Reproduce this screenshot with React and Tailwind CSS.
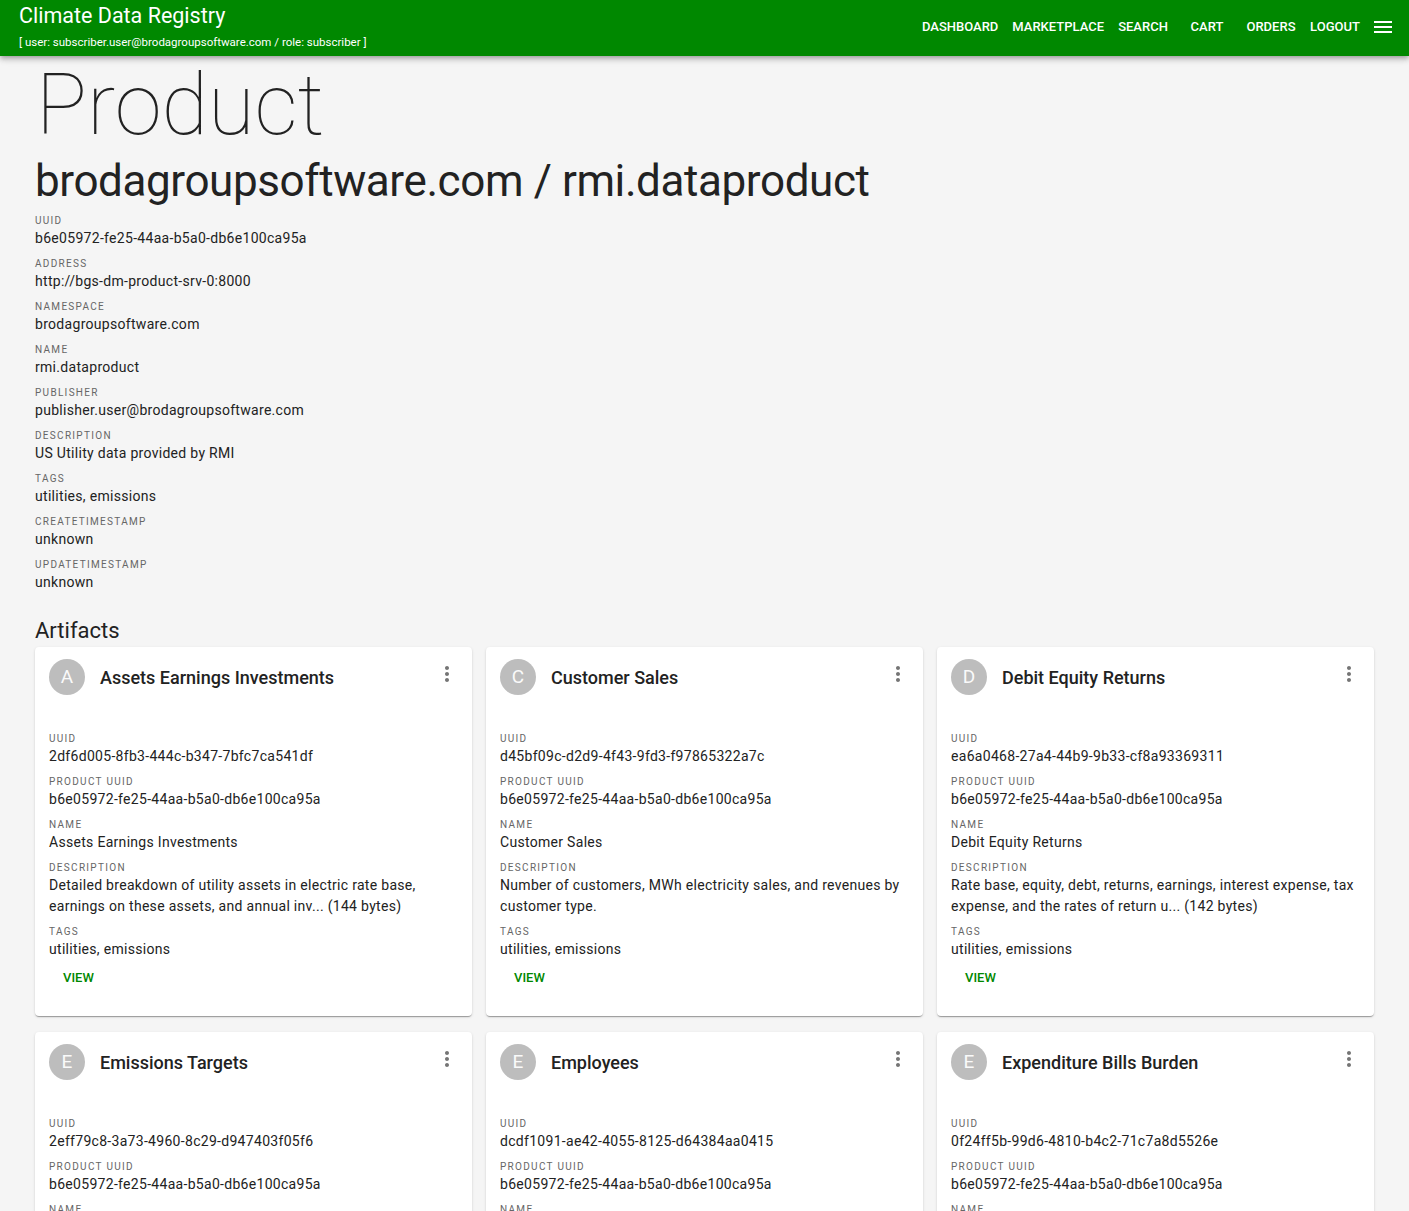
import React from 'react';

const PRODUCT_UUID = 'b6e05972-fe25-44aa-b5a0-db6e100ca95a';

const PRODUCT_FIELDS = [
  { label: 'uuid', value: PRODUCT_UUID },
  { label: 'address', value: 'http://bgs-dm-product-srv-0:8000' },
  { label: 'namespace', value: 'brodagroupsoftware.com' },
  { label: 'name', value: 'rmi.dataproduct' },
  { label: 'publisher', value: 'publisher.user@brodagroupsoftware.com' },
  { label: 'description', value: 'US Utility data provided by RMI' },
  { label: 'tags', value: 'utilities, emissions' },
  { label: 'createtimestamp', value: 'unknown' },
  { label: 'updatetimestamp', value: 'unknown' }
];

const ARTIFACTS = [
  {
    name: 'Assets Earnings Investments',
    uuid: '2df6d005-8fb3-444c-b347-7bfc7ca541df',
    description: 'Detailed breakdown of utility assets in electric rate base, earnings on these assets, and annual inv... (144 bytes)'
  },
  {
    name: 'Customer Sales',
    uuid: 'd45bf09c-d2d9-4f43-9fd3-f97865322a7c',
    description: 'Number of customers, MWh electricity sales, and revenues by customer type.'
  },
  {
    name: 'Debit Equity Returns',
    uuid: 'ea6a0468-27a4-44b9-9b33-cf8a93369311',
    description: 'Rate base, equity, debt, returns, earnings, interest expense, tax expense, and the rates of return u... (142 bytes)'
  },
  {
    name: 'Emissions Targets',
    uuid: '2eff79c8-3a73-4960-8c29-d947403f05f6',
    description: 'Utility emissions targets and progress toward stated reduction goals.'
  },
  {
    name: 'Employees',
    uuid: 'dcdf1091-ae42-4055-8125-d64384aa0415',
    description: 'Number of employees by utility and operating company.'
  },
  {
    name: 'Expenditure Bills Burden',
    uuid: '0f24ff5b-99d6-4810-b4c2-71c7a8d5526e',
    description: 'Customer expenditures, average bills, and energy burden by customer type.'
  }
];

const NAV = ['Dashboard', 'Marketplace', 'Search', 'Cart', 'Orders', 'Logout'];

function Label({ children }) {
  return <div className="text-[10px] leading-[14px] uppercase tracking-[1.3px] text-[#666]">{children}</div>;
}

function Value({ children }) {
  return <div className="text-[14px] leading-[21px] tracking-[0.3px] text-[#222]">{children}</div>;
}

function Field({ label, value, last }) {
  return (
    <div className={last ? '' : 'mb-[8px]'}>
      <Label>{label}</Label>
      <Value>{value}</Value>
    </div>
  );
}

function MoreIcon() {
  return (
    <svg viewBox="0 0 24 24" className="w-[24px] h-[24px] fill-[#757575]">
      <path d="M12 8c1.1 0 2-.9 2-2s-.9-2-2-2-2 .9-2 2 .9 2 2 2zm0 2c-1.1 0-2 .9-2 2s.9 2 2 2 2-.9 2-2-.9-2-2-2zm0 6c-1.1 0-2 .9-2 2s.9 2 2 2 2-.9 2-2-.9-2-2-2z" />
    </svg>
  );
}

function ArtifactCard({ artifact }) {
  return (
    <div className="bg-white rounded-[4px] shadow-[0_2px_1px_-1px_rgba(0,0,0,0.2),0_1px_1px_0_rgba(0,0,0,0.14),0_1px_3px_0_rgba(0,0,0,0.12)] px-[14px] pt-[12px] pb-[15px] flex flex-col">
      <div className="flex items-center h-[36px]">
        <div className="w-[36px] h-[36px] rounded-full bg-[#bdbdbd] text-[#fafafa] text-[19px] flex items-center justify-center shrink-0">
          {artifact.name[0]}
        </div>
        <div className="ml-[15px] flex-1 text-[18px] font-medium text-[#222]">{artifact.name}</div>
        <div className="mr-[-1px] mt-[-6px]">
          <MoreIcon />
        </div>
      </div>
      <div className="mt-[37px]">
        <Field label="uuid" value={artifact.uuid} />
        <Field label="product uuid" value={PRODUCT_UUID} />
        <Field label="name" value={artifact.name} />
        <Field label="description" value={artifact.description} />
        <Field label="tags" value="utilities, emissions" last />
      </div>
      <div className="mt-[3px] mb-[8px]">
        <button className="ml-[6px] px-[8px] h-[30px] text-[13px] font-medium uppercase text-[#008800]">
          View
        </button>
      </div>
    </div>
  );
}

export default function App() {
  return (
    <div className="min-h-screen bg-[#f5f5f5] font-['Roboto',sans-serif]">
      <header className="h-[56px] bg-[#008800] text-white flex justify-between shadow-[0_2px_4px_-1px_rgba(0,0,0,0.2),0_4px_5px_0_rgba(0,0,0,0.14),0_1px_10px_0_rgba(0,0,0,0.12)] relative z-10">
        <div className="pl-[19px] pt-[3px]">
          <div className="text-[21.5px] leading-[26px]">Climate Data Registry</div>
          <div className="text-[11.5px] leading-[14px] mt-[6px]">[ user: subscriber.user@brodagroupsoftware.com / role: subscriber ]</div>
        </div>
        <nav className="flex items-center pb-[2px] pr-[14px]">
          {NAV.map((item) => (
            <button key={item} className="min-w-[64px] px-[7px] h-[36px] flex items-center justify-center text-[13px] font-medium uppercase">
              {item}
            </button>
          ))}
          <svg viewBox="0 0 24 24" className="w-[24px] h-[24px] fill-white ml-[4px]">
            <path d="M3 18h18v-2H3v2zm0-5h18v-2H3v2zm0-7v2h18V6H3z" />
          </svg>
        </nav>
      </header>

      <main className="px-[35px] pt-[5px] pb-[40px]">
        <h1 className="text-[85px] leading-[88px] font-thin text-[#222] pl-[1px]">Product</h1>
        <h2 className="text-[44px] leading-[48px] tracking-[-0.4px] text-[#222] mt-[8px]">brodagroupsoftware.com / rmi.dataproduct</h2>
        <div className="mt-[9px]">
          {PRODUCT_FIELDS.map((f) => (
            <Field key={f.label} label={f.label} value={f.value} />
          ))}
        </div>
        <h3 className="text-[22px] leading-[32px] text-[#222] mt-[22px]">Artifacts</h3>
        <div className="grid grid-cols-3 gap-x-[14px] gap-y-[16px]">
          {ARTIFACTS.map((a) => (
            <ArtifactCard key={a.uuid} artifact={a} />
          ))}
        </div>
      </main>
    </div>
  );
}
